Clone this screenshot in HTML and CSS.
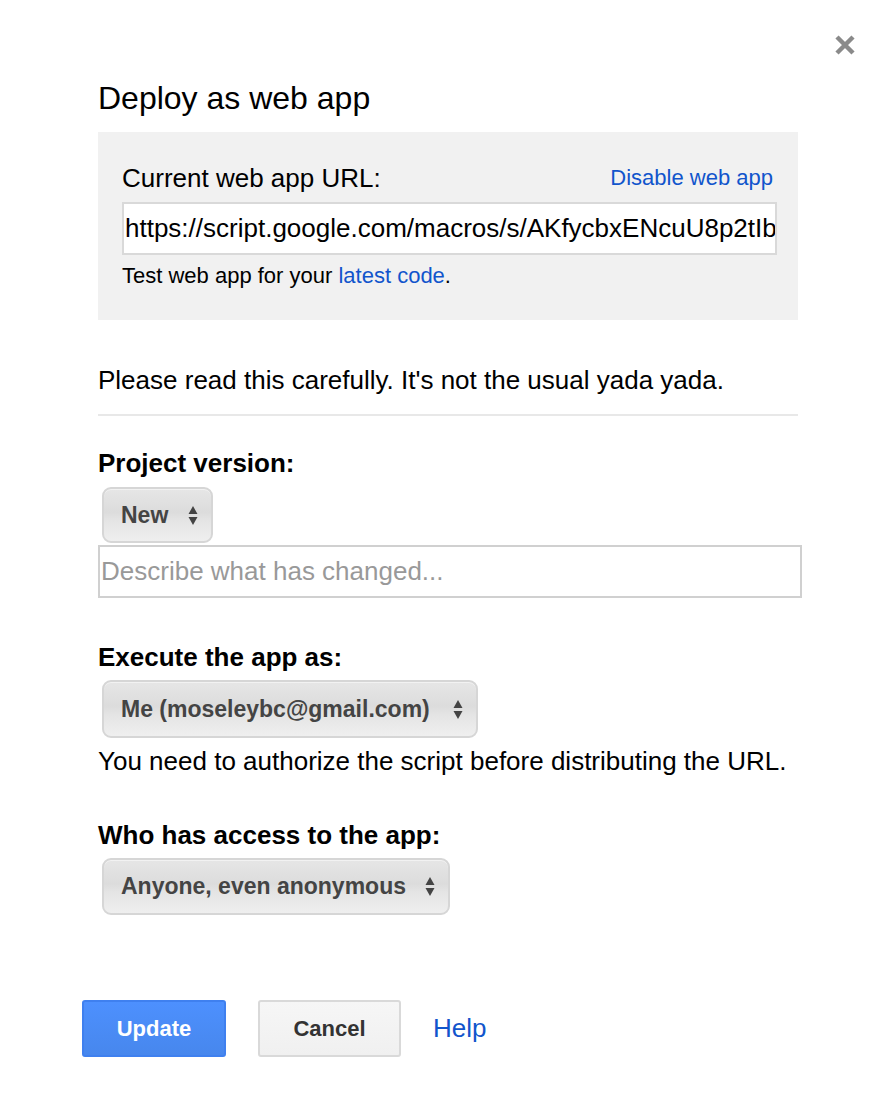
FILE: index.html
```html
<!DOCTYPE html>
<html>
<head>
<meta charset="utf-8">
<link rel="stylesheet" href="styles.css">
</head>
<body>
<div class="dialog">
  <button class="close" aria-label="Close">
    <svg width="22" height="22" viewBox="0 0 22 22"><path d="M3 3L19 19M19 3L3 19" stroke="#8a8a8a" stroke-width="4.5" stroke-linecap="butt"/></svg>
  </button>
  <h1 class="title">Deploy as web app</h1>
  <div class="current">
    <div class="current-head">
      <span class="current-label">Current web app URL:</span>
      <a class="link disable">Disable web app</a>
    </div>
    <div class="url-box">https://script.google.com/macros/s/AKfycbxENcuU8p2tIb</div>
    <div class="test">Test web app for your <a class="link">latest code</a>.</div>
  </div>
  <p class="notice">Please read this carefully. It's not the usual yada yada.</p>
  <hr class="sep">
  <div class="field first">
    <div class="label">Project version:</div>
    <div class="select sel-new">New<svg class="arrows" width="10" height="21" viewBox="0 0 10 21"><path d="M5 1L9.5 9H0.5Z M5 20L9.5 12H0.5Z" fill="#444"/></svg></div>
    <div class="desc">Describe what has changed...</div>
  </div>
  <div class="field">
    <div class="label">Execute the app as:</div>
    <div class="select sel-me">Me (moseleybc@gmail.com)<svg class="arrows" width="10" height="21" viewBox="0 0 10 21"><path d="M5 1L9.5 9H0.5Z M5 20L9.5 12H0.5Z" fill="#444"/></svg></div>
    <div class="hint">You need to authorize the script before distributing the URL.</div>
  </div>
  <div class="field">
    <div class="label">Who has access to the app:</div>
    <div class="select sel-who">Anyone, even anonymous<svg class="arrows" width="10" height="21" viewBox="0 0 10 21"><path d="M5 1L9.5 9H0.5Z M5 20L9.5 12H0.5Z" fill="#444"/></svg></div>
  </div>
  <div class="buttons">
    <button class="btn primary">Update</button>
    <button class="btn">Cancel</button>
    <a class="link help">Help</a>
  </div>
</div>
</body>
</html>
```
FILE: styles.css
```css
* { box-sizing: border-box; }
html, body { margin: 0; padding: 0; background: #fff; }
body { font-family: "Liberation Sans", Arial, sans-serif; color: #000; }
.dialog { position: relative; width: 894px; height: 1106px; padding: 78px 92px 0 98px; }
.close { position: absolute; top: 34px; right: 38px; background: none; border: 0; padding: 0; width: 22px; height: 22px; cursor: pointer; }
.close svg { display: block; }
.title { margin: 0; font-size: 32px; font-weight: normal; line-height: 40px; }
.current { margin-top: 14px; width: 700px; height: 188px; background: #f1f1f1; padding: 31px 21px 0 24px; }
.current-head { display: flex; justify-content: space-between; align-items: center; height: 30px; }
.current-label { font-size: 26px; }
.link { color: #1155cc; text-decoration: none; }
.disable { font-size: 22px; margin-right: 4px; }
.url-box { margin-top: 9px; height: 53px; background: #fff; border: 2px solid #d9d9d9; font-size: 26px; line-height: 49px; padding-left: 1px; white-space: nowrap; overflow: hidden; }
.test { margin-top: 9px; font-size: 22px; line-height: 24px; }
.notice { margin: 45px 0 0; font-size: 26px; line-height: 30px; }
.sep { margin: 19px 0 0; width: 700px; border: 0; border-top: 2px solid #e8e8e8; height: 0; }
.field { margin-top: 44px; }
.field.first { margin-top: 32px; }
.label { font-size: 26px; font-weight: bold; line-height: 30px; }
.select { display: flex; align-items: center; justify-content: space-between; margin: 8px 0 0 4px; height: 58px; padding: 0 13px 0 17px; border: 2px solid #d6d6d6; border-radius: 9px; background: linear-gradient(#e6e6e6, #dcdcdc 45%, #e4e4e4 60%, #efefef); box-shadow: inset 0 1px 0 #f2f2f2; font-size: 23px; font-weight: bold; color: #444; }
.sel-new { width: 111px; height: 56px; margin-top: 9px; }
.sel-me { width: 376px; }
.sel-who { width: 348px; height: 57px; }
.arrows { display: block; flex: none; }
.desc { margin-top: 2px; width: 704px; height: 53px; border: 2px solid #d0d0d0; font-size: 26px; line-height: 49px; color: #999; padding-left: 1px; }
.hint { margin-top: 8px; font-size: 26px; line-height: 30px; }
.buttons { display: flex; align-items: center; margin: 85px 0 0 -16px; }
.btn { height: 57px; width: 144px; border-radius: 3px; border: 2px solid #d9d9d9; background: linear-gradient(#f6f6f6, #f0f0f0); font-family: inherit; font-size: 22px; font-weight: bold; color: #333; margin-right: 32px; padding: 0; }
.btn.primary { background: linear-gradient(#4d90fe, #4787ed); border-color: #3f80ef; color: #fff; }
.btn + .btn { width: 143px; }
.help { font-size: 26px; }
```
